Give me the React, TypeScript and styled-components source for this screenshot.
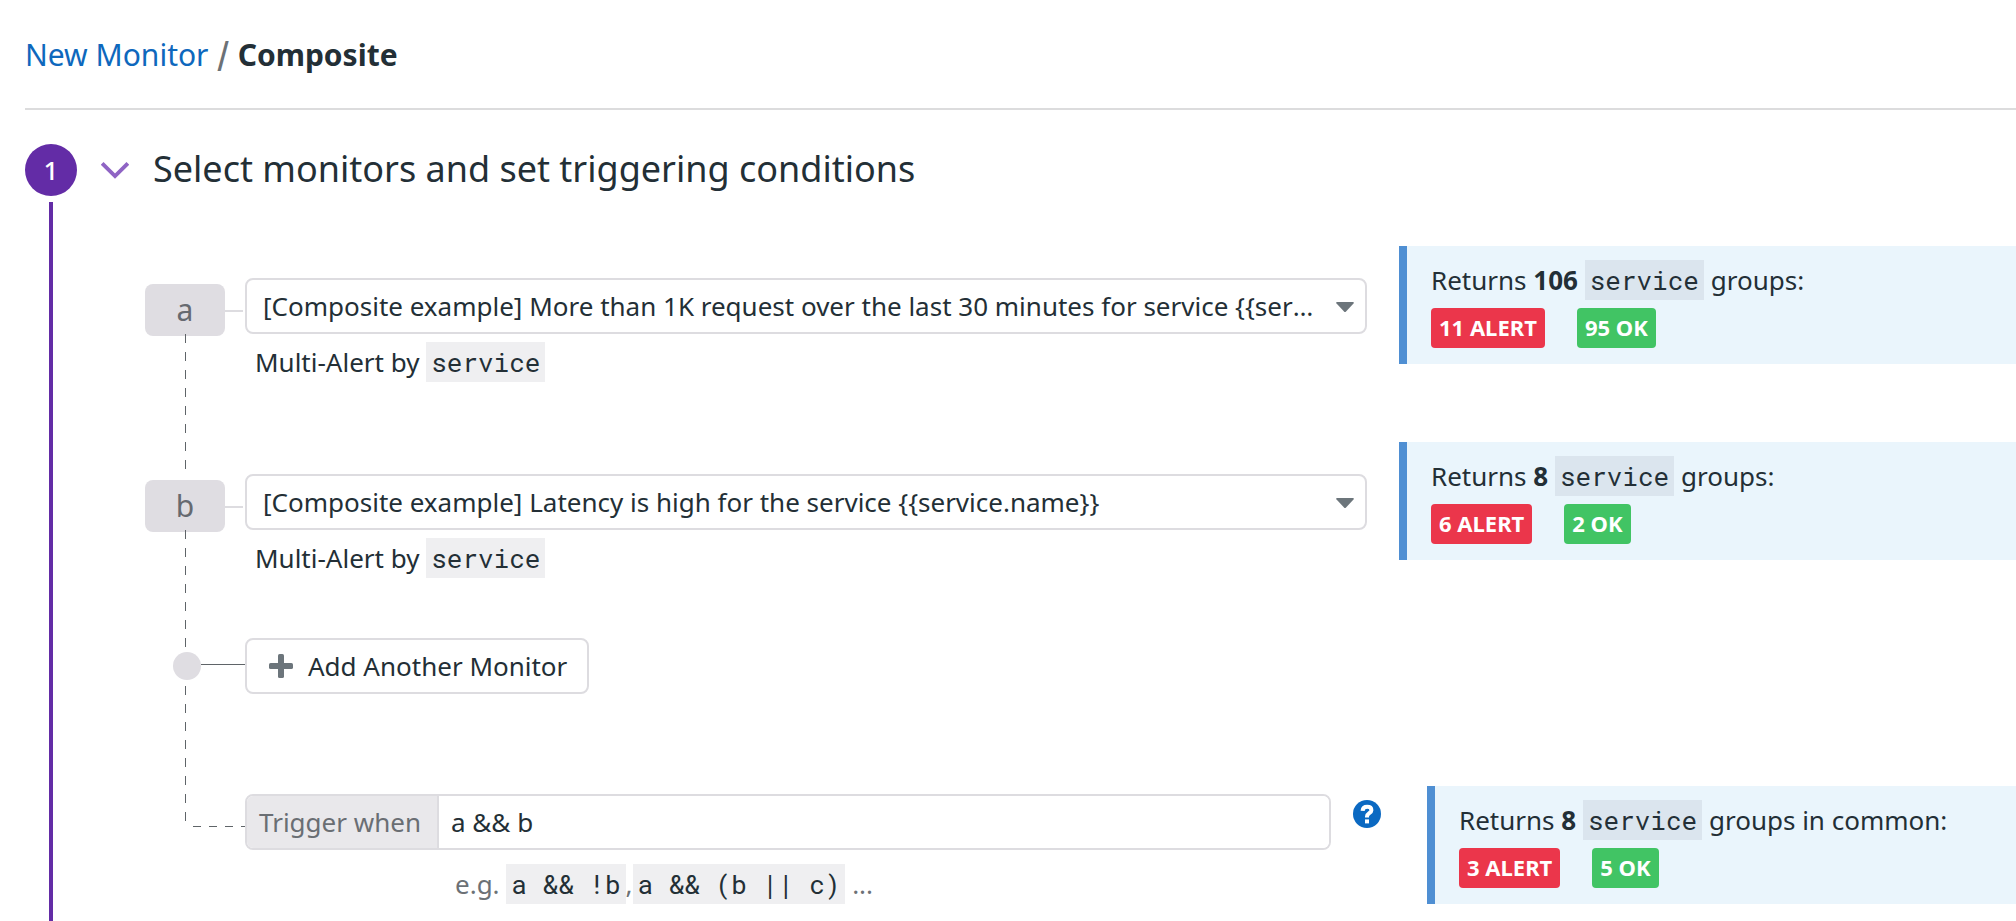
import React, { useState } from "react";
import styled, { createGlobalStyle, css } from "styled-components";

const color = {
  text: "#232f36",
  muted: "#6c7176",
  border: "#dddce0",
  tag: "#dfdde2",
  purple: "#632ca6",
  link: "#0e68bd",
};

const GlobalStyle = createGlobalStyle`
  *, *::before, *::after { box-sizing: border-box; }
  body {
    margin: 0;
    background: #fff;
    color: ${color.text};
    font-family: "Noto Sans", "Open Sans", sans-serif;
    font-size: 26px;
    line-height: 40px;
  }
  button, input, select { font: inherit; color: inherit; margin: 0; }
`;

const Page = styled.div`
  display: flex;
  flex-direction: column;
  min-height: 100vh;
  padding-left: 25px;
`;

const Breadcrumb = styled.nav`
  display: flex;
  align-items: center;
  gap: 9px;
  height: 110px;
  padding-top: 2px;
  border-bottom: 2px solid #dcdcdd;
  font-size: 30px;
`;

const CrumbLink = styled.a`
  color: ${color.link};
  text-decoration: none;
`;

const CrumbSlash = styled.span`
  padding-top: 4px;
  color: ${color.muted};
  font-family: "Liberation Sans", Arial, sans-serif;
  font-size: 40px;
`;

const Step = styled.section`
  flex: 1;
  display: grid;
  grid-template-columns: 52px minmax(0, 1fr);
  column-gap: 24px;
  padding-top: 34px;
`;

const StepTrack = styled.div`
  display: flex;
  flex-direction: column;
  align-items: center;
  gap: 6px;

  &::after {
    content: "";
    flex: 1;
    width: 4px;
    background: ${color.purple};
  }
`;

const StepNumber = styled.span`
  display: grid;
  place-items: center;
  width: 52px;
  height: 52px;
  border-radius: 50%;
  background: ${color.purple};
  color: #fff;
  font-weight: 500;
`;

const StepHeader = styled.header`
  display: flex;
  align-items: center;
  gap: 24px;
  height: 52px;
`;

const CollapseButton = styled.button`
  display: flex;
  padding: 0;
  border: 0;
  background: none;
`;

const StepTitle = styled.h2`
  margin: 0;
  padding-bottom: 2px;
  font-size: 36px;
  font-weight: 400;
`;

const Rows = styled.div`
  display: flex;
  flex-direction: column;
  gap: 60px;
  padding: 50px 0 16px 44px;
`;

const Row = styled.div`
  display: grid;
  grid-template-columns: 100px minmax(0, 1122fr) minmax(0, 649fr);
`;

const TriggerRow = styled(Row)`
  grid-template-columns: 100px minmax(0, 1136fr) minmax(0, 635fr);
  margin-top: 32px;
`;

const Rail = styled.div<{ $from?: number; $overrun?: number }>`
  position: relative;
  display: flex;
  align-items: flex-start;

  ${({ $from, $overrun }) =>
    $from !== undefined &&
    css`
      &::after {
        content: "";
        position: absolute;
        left: 40px;
        top: ${$from}px;
        bottom: -${$overrun}px;
        width: 1px;
        background: repeating-linear-gradient(
          to bottom,
          #5f6468 0 9px,
          transparent 9px 18px
        );
      }
    `}
`;

const Tag = styled.label`
  display: grid;
  place-items: center;
  width: 80px;
  height: 52px;
  margin-top: 38px;
  border-radius: 8px;
  background: ${color.tag};
  color: #666a70;
  font-size: 30px;
`;

const TagConnector = styled.span`
  width: 18px;
  height: 2px;
  margin-top: 64px;
  background: ${color.border};
`;

const Dot = styled.span`
  width: 28px;
  height: 28px;
  margin: 14px 0 0 28px;
  border-radius: 50%;
  background: ${color.tag};
`;

const DotConnector = styled.span`
  flex: 1;
  height: 1px;
  margin-top: 26px;
  background: #5f6468;
`;

const TriggerConnector = styled.span`
  width: 52px;
  height: 1px;
  margin: 40px 0 0 48px;
  background: repeating-linear-gradient(
    to right,
    #5f6468 0 8px,
    transparent 8px 16px
  );
`;

const MonitorField = styled.div`
  padding-top: 32px;
`;

const SelectBox = styled.div`
  position: relative;
`;

const MonitorSelect = styled.select`
  appearance: none;
  display: block;
  width: 100%;
  height: 56px;
  padding: 0 50px 0 16px;
  border: 2px solid ${color.border};
  border-radius: 8px;
  background: #fff;
  text-overflow: ellipsis;
`;

const Caret = styled.svg`
  position: absolute;
  right: 13px;
  top: 24px;
  pointer-events: none;
`;

const GroupingNote = styled.p`
  margin: 8px 0 0 10px;
`;

const Code = styled.code`
  display: inline-block;
  padding: 0 5px;
  background: rgba(35, 30, 50, 0.07);
  color: ${color.text};
  font-family: "Roboto Mono", "Liberation Mono", monospace;
  vertical-align: top;
`;

const Callout = styled.aside<{ $gap: number }>`
  align-self: start;
  margin-left: ${({ $gap }) => $gap}px;
  height: 118px;
  padding: 14px 24px 0;
  border-left: 8px solid #4f8fd3;
  background: #eaf5fc;
  white-space: nowrap;
`;

const CalloutText = styled.p`
  margin: 0;
`;

const Badges = styled.div`
  display: flex;
  gap: 32px;
  margin-top: 8px;
`;

const Badge = styled.span<{ $tone: "alert" | "ok" }>`
  padding: 0 8px 2px;
  border-radius: 4px;
  background: ${({ $tone }) => ($tone === "alert" ? "#eb364b" : "#41c464")};
  color: #fff;
  font-size: 22px;
  font-weight: 700;
  line-height: 38px;
`;

const AddButton = styled.button`
  display: flex;
  justify-self: start;
  align-items: center;
  gap: 15px;
  height: 56px;
  padding: 0 20px 0 22px;
  border: 2px solid ${color.border};
  border-radius: 8px;
  background: #fff;
`;

const TriggerField = styled.div`
  display: flex;
  align-items: flex-start;
  gap: 22px;
  padding-top: 8px;
`;

const InputGroup = styled.div`
  flex: 1;
  display: flex;
  height: 56px;
  border: 2px solid ${color.border};
  border-radius: 8px;
  overflow: hidden;
`;

const InputLabel = styled.label`
  display: flex;
  align-items: center;
  padding: 0 16px 0 12px;
  border-right: 2px solid ${color.border};
  background: #e9e8eb;
  color: #6a6e73;
`;

const TriggerInput = styled.input`
  flex: 1;
  min-width: 0;
  padding: 0 12px;
  border: 0;
  outline: 0;
  background: #fff;
`;

const HelpButton = styled.button`
  display: flex;
  margin-top: 6px;
  padding: 0;
  border: 0;
  background: none;
`;

const Examples = styled.p`
  margin: 14px 0 0 210px;
  color: ${color.muted};
  white-space: nowrap;
`;

type ResultProps = {
  count: number;
  alert: number;
  ok: number;
  suffix?: string;
  gap?: number;
};

function Result({ count, alert, ok, suffix = "groups:", gap = 32 }: ResultProps) {
  return (
    <Callout $gap={gap}>
      <CalloutText>
        Returns <strong>{count}</strong> <Code>service</Code> {suffix}
      </CalloutText>
      <Badges>
        <Badge $tone="alert">{alert} ALERT</Badge>
        <Badge $tone="ok">{ok} OK</Badge>
      </Badges>
    </Callout>
  );
}

const monitors = [
  {
    id: "a",
    name: "[Composite example] More than 1K request over the last 30 minutes for service {{service.name}}",
    count: 106,
    alert: 11,
    ok: 95,
    overrun: 87,
  },
  {
    id: "b",
    name: "[Composite example] Latency is high for the service {{service.name}}",
    count: 8,
    alert: 6,
    ok: 2,
    overrun: 69,
  },
];

export default function App() {
  const [trigger, setTrigger] = useState("a && b");

  return (
    <Page>
      <GlobalStyle />
      <Breadcrumb aria-label="Breadcrumb">
        <CrumbLink href="#new-monitor">New Monitor</CrumbLink>
        <CrumbSlash>/</CrumbSlash>
        <strong>Composite</strong>
      </Breadcrumb>

      <Step>
        <StepTrack>
          <StepNumber>1</StepNumber>
        </StepTrack>
        <div>
          <StepHeader>
            <CollapseButton type="button" aria-label="Collapse step">
              <svg width="28" height="18" viewBox="0 0 28 18" fill="none">
                <path d="M1.2 2.4 L14 15 L26.8 2.4" stroke="#8f64c4" strokeWidth="3.8" />
              </svg>
            </CollapseButton>
            <StepTitle>Select monitors and set triggering conditions</StepTitle>
          </StepHeader>

          <Rows>
            {monitors.map((m) => (
              <Row key={m.id}>
                <Rail $from={88} $overrun={m.overrun}>
                  <Tag htmlFor={`monitor-${m.id}`}>{m.id}</Tag>
                  <TagConnector />
                </Rail>
                <MonitorField>
                  <SelectBox>
                    <MonitorSelect id={`monitor-${m.id}`}>
                      <option>{m.name}</option>
                    </MonitorSelect>
                    <Caret width="18" height="10" viewBox="0 0 18 10">
                      <path
                        d="M1 0 H17 Q18.4 .3 17.5 1.5 L10 9.4 Q9 10.4 8 9.4 L.5 1.5 Q-.4 .3 1 0 Z"
                        fill="#6c757b"
                      />
                    </Caret>
                  </SelectBox>
                  <GroupingNote>
                    Multi-Alert by <Code>service</Code>
                  </GroupingNote>
                </MonitorField>
                <Result count={m.count} alert={m.alert} ok={m.ok} />
              </Row>
            ))}

            <Row>
              <Rail $from={48} $overrun={127}>
                <Dot />
                <DotConnector />
              </Rail>
              <AddButton type="button">
                <svg width="24" height="24" viewBox="0 0 24 24" fill="#6c757b">
                  <rect x="9" y="0" width="6" height="24" rx="1.6" />
                  <rect x="0" y="9" width="24" height="6" rx="1.6" />
                </svg>
                Add Another Monitor
              </AddButton>
            </Row>

            <TriggerRow>
              <Rail>
                <TriggerConnector />
              </Rail>
              <div>
                <TriggerField>
                  <InputGroup>
                    <InputLabel htmlFor="trigger">Trigger when</InputLabel>
                    <TriggerInput
                      id="trigger"
                      value={trigger}
                      onChange={(e) => setTrigger(e.target.value)}
                    />
                  </InputGroup>
                  <HelpButton type="button" aria-label="Help">
                    <svg width="28" height="28" viewBox="0 0 28 28" fill="none">
                      <circle cx="14" cy="14" r="14" fill="#0b69c2" />
                      <path
                        d="M9.6 10.8 C9.8 8 11.6 6.8 14.2 6.8 C16.8 6.8 18.4 8.2 18.4 10.2 C18.4 13.2 14 13.2 14 16.4 V17.4"
                        stroke="#fff"
                        strokeWidth="4"
                      />
                      <rect x="12" y="19.4" width="4" height="4" fill="#fff" />
                    </svg>
                  </HelpButton>
                </TriggerField>
                <Examples>
                  e.g. <Code>a && !b</Code>,<Code>a && (b || c)</Code> ...
                </Examples>
              </div>
              <Result count={8} alert={3} ok={5} suffix="groups in common:" gap={46} />
            </TriggerRow>
          </Rows>
        </div>
      </Step>
    </Page>
  );
}
